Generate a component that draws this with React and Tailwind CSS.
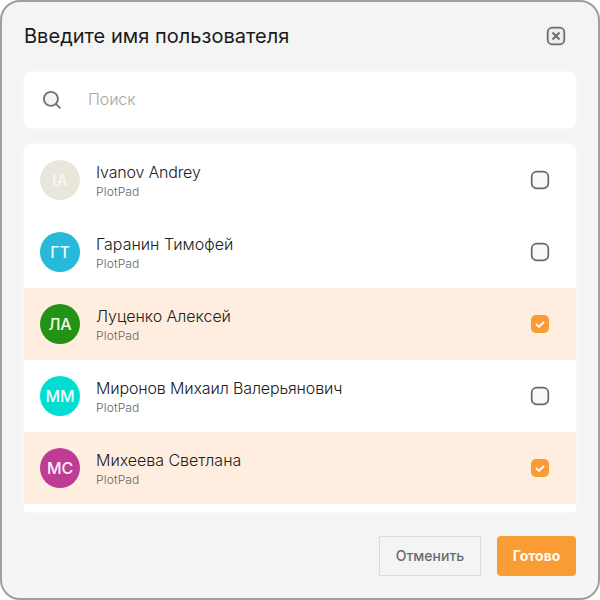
const users = [
  { initials: 'IA', name: 'Ivanov Andrey', color: 'bg-[#e9e6dc] text-[#f8f7ef]', tracking: 'tracking-[-0.18px]', checked: false },
  { initials: 'ГТ', name: 'Гаранин Тимофей', color: 'bg-[#27b9da] text-[#e9fbff]', tracking: 'tracking-normal', checked: false },
  { initials: 'ЛА', name: 'Луценко Алексей', color: 'bg-[#229314] text-[#f1fbef]', tracking: 'tracking-[-0.04px]', checked: true },
  { initials: 'ММ', name: 'Миронов Михаил Валерьянович', color: 'bg-[#00ded2] text-[#effffc]', tracking: 'tracking-[-0.14px]', checked: false },
  { initials: 'МС', name: 'Михеева Светлана', color: 'bg-[#bf3c94] text-[#fff1fa]', tracking: 'tracking-[-0.03px]', checked: true },
];

function Checkbox({ checked }) {
  return (
    <svg className="size-6 shrink-0" viewBox="0 0 24 24" fill="none">
      {checked ? (
        <>
          <rect x="3" y="3" width="18" height="18" rx="5" fill="#f99c34" />
          <path d="M8 12l3 2.9 5.1-5.1" stroke="#fffaf0" strokeWidth="2" />
        </>
      ) : (
        <rect x="3.7" y="3.7" width="16.6" height="16.6" rx="5" fill="#f9f9f9" stroke="#6b6b6b" strokeWidth="1.8" />
      )}
    </svg>
  );
}

function UserRow({ user }) {
  return (
    <li className={`flex h-18 shrink-0 items-center px-4 ${user.checked ? 'bg-[#ffeedf]' : 'bg-white'}`}>
      <div className={`flex size-10 shrink-0 items-center justify-center rounded-full text-base leading-none font-medium tracking-[-0.2px] ${user.color}`}>
        {user.initials}
      </div>
      <div className="ml-4 flex grow flex-col">
        <span className={`text-base leading-6 font-light whitespace-nowrap text-[#202020] ${user.tracking}`}>{user.name}</span>
        <span className="text-xs leading-4 font-light tracking-[0.15px] text-[#666]">PlotPad</span>
      </div>
      <div className="mr-2">
        <Checkbox checked={user.checked} />
      </div>
    </li>
  );
}

export default function App() {
  return (
    <div className="h-[600px] w-[600px] bg-white font-['Inter',sans-serif]">
      <div className="flex h-full flex-col rounded-[20px] border-2 border-[#a39d9d] bg-[#f4f4f4] px-[22px] pt-[22px]">
        <header className="flex h-6 items-center justify-between">
          <h1 className="text-xl leading-6 font-normal tracking-[0.03px] text-[#1a1a1a]">Введите имя пользователя</h1>
          <svg className="mr-2 size-6" viewBox="0 0 24 24" fill="none" stroke="#6b6b6b">
            <rect x="3.7" y="3.7" width="16.6" height="16.6" rx="4.6" fill="#ededed" strokeWidth="1.8" />
            <path d="M8.5 8.5l7 7M15.5 8.5l-7 7" strokeWidth="1.9" />
          </svg>
        </header>

        <div className="mt-6 flex h-14 shrink-0 items-center rounded-lg bg-white px-4 shadow-[0_0_5px_#fafafa]">
          <svg className="size-6" viewBox="0 0 24 24" fill="none" stroke="#737373" strokeWidth="1.9">
            <circle cx="10.9" cy="10.9" r="7" fill="#f4f4f4" />
            <path d="M15.9 15.9l4.5 4.5" />
          </svg>
          <span className="ml-6 pb-0.5 text-base font-light tracking-[-0.1px] text-[#a6a6a6]">Поиск</span>
        </div>

        <ul className="mt-4 flex h-[368px] shrink-0 flex-col overflow-hidden rounded-t-lg rounded-b bg-white shadow-[0_0_5px_#fafafa]">
          {users.map((user) => (
            <UserRow key={user.name} user={user} />
          ))}
        </ul>

        <footer className="mt-6 flex justify-end gap-4">
          <button className="h-10 w-[102px] rounded-xs border border-[#d9d9d9] text-sm font-medium text-[#6b6b6b]">Отменить</button>
          <button className="h-10 w-[79px] rounded bg-[#f99c34] text-sm font-bold text-[#fffaf0]">Готово</button>
        </footer>
      </div>
    </div>
  );
}
